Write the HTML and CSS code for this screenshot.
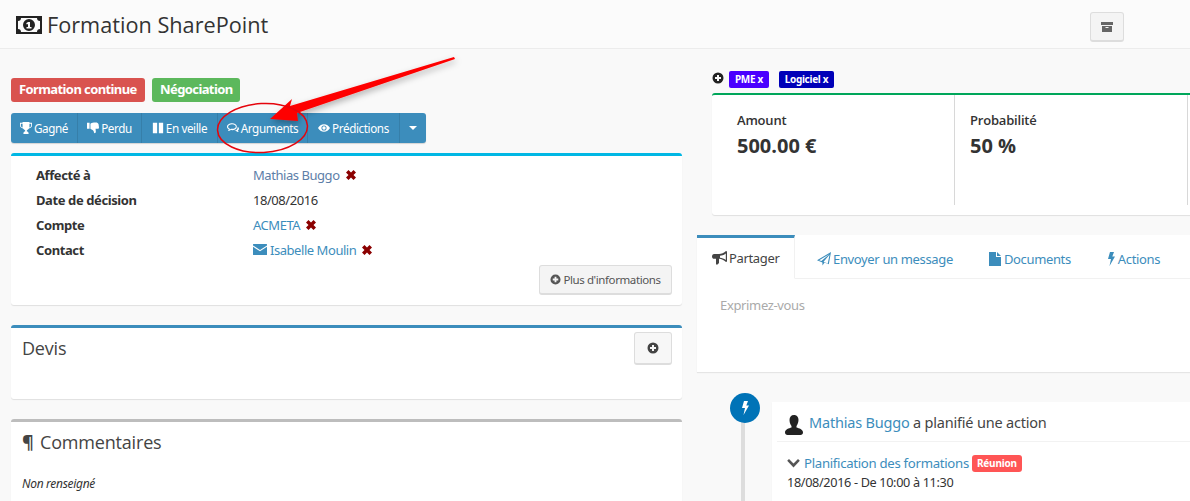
FILE: index.html
```html
<!DOCTYPE html>
<html lang="fr">
<head>
<meta charset="utf-8">
<title>Formation SharePoint</title>
<link rel="stylesheet" href="styles.css">
</head>
<body>
<svg class="defs" width="0" height="0">
  <symbol id="i-plus" viewBox="0 0 24 24"><path fill-rule="evenodd" d="M12 1a11 11 0 1 0 0 22a11 11 0 0 0 0-22zM10 6h4v4h4v4h-4v4h-4v-4H6v-4h4z"/></symbol>
  <symbol id="i-x" viewBox="0 0 24 24"><path d="M7 2l5 5 5-5 5 5-5 5 5 5-5 5-5-5-5 5-5-5 5-5-5-5z"/></symbol>
</svg>
<header class="topbar">
  <svg class="money" viewBox="0 0 26 18"><path fill-rule="evenodd" d="M0 0h26v18H0zM2 5v8a3 3 0 0 1 3 3h16a3 3 0 0 1 3-3V5a3 3 0 0 1-3-3H5a3 3 0 0 1-3 3z"/><path fill-rule="evenodd" d="M13 3a6 6 0 0 0 0 12a6 6 0 0 0 0-12zM12 6h2v5h1.500v1.500h-5V11H12V8l-1.200.6-.6-1.300z"/></svg>
  <h1 class="title">Formation SharePoint</h1>
  <button class="archive" type="button"><svg viewBox="0 0 12 12"><path d="M0 1h12v3H0zM1 5h10v6H1z"/><rect x="4.500" y="6" width="3" height="1" fill="#f4f4f4"/></svg></button>
</header>
<main class="layout">
  <section class="left">
    <div class="labels">
      <span class="label red">Formation continue</span>
      <span class="label green">Négociation</span>
    </div>
    <div class="btn-group">
      <a class="act w67"><svg viewBox="0 0 14 14"><path d="M3 0h8v1h3v3c0 2-2 3-3.500 3.500C10 8.500 8.500 9 8 9.500V11c1 0 2 .5 2 2v1H4v-1c0-1.500 1-2 2-2V9.500C5.500 9 4 8.500 3.500 7.500 2 7 0 6 0 4V1h3zM1 2v2c0 1 1 2 2 2.300V2zm12 0h-2v4.300c1-.3 2-1.300 2-2.300z"/></svg>Gagné</a>
      <a class="act w64"><svg viewBox="0 0 14 14"><path d="M0 1h3v7H0zM4 2c2-1.500 3-1.500 6-1.500 2 0 3 .5 3.500 2l.5 4c0 1-.5 1.500-1.500 1.500H10l.3 3c0 1-.5 2-1.300 2-.7 0-1-.5-1-1.500C7.500 10 6 9 4 8z"/></svg>Perdu</a>
      <a class="act w76"><svg viewBox="0 0 14 14"><path d="M1 1h5v12H1zM8 1h5v12H8z"/></svg>En veille</a>
      <a class="act w90"><svg viewBox="0 0 14 14"><path fill-rule="evenodd" d="M6 1.500c3 0 5.500 1.500 5.500 4s-2.500 4-5.500 4c-.6 0-1 0-1.500-.1C3.500 10.200 2.300 10.500 1 10.500c.7-.7 1-1.300 1.100-2C.8 7.700 0 6.700 0 5.500c0-2.500 3-4 6-4zm0 1.200c-2.500 0-4.700 1.200-4.700 2.800 0 1 .8 1.800 2 2.300l-.2 1c.6-.2 1-.5 1.500-.9.500.1.900.1 1.400.1 2.500 0 4.300-1.100 4.300-2.500S8.500 2.700 6 2.700z"/><path d="M12.500 5.500c1 .6 1.500 1.400 1.500 2.300 0 .9-.5 1.700-1.300 2.200.1.600.5 1.200 1 1.700-1.200 0-2.300-.5-3-1.200-.6.100-1.500 0-2-.2 2.500-.3 4-2 3.800-4.800z"/></svg>Arguments</a>
      <a class="act w92"><svg viewBox="0 0 14 14"><path fill-rule="evenodd" d="M7 2.500c3 0 5.500 1.800 7 4.500-1.500 2.700-4 4.500-7 4.500S1.500 9.700 0 7c1.500-2.700 4-4.500 7-4.500zM7 4a3 3 0 1 0 0 6 3 3 0 0 0 0-6z"/><circle cx="7" cy="7" r="2"/></svg>Prédictions</a>
      <a class="act caret-btn"><span class="caret"></span></a>
    </div>
    <div class="panel info">
      <dl class="rows">
        <dt>Affecté à</dt><dd><a class="muted">Mathias Buggo</a><svg class="del"><use href="#i-x"/></svg></dd>
        <dt>Date de décision</dt><dd>18/08/2016</dd>
        <dt>Compte</dt><dd><a>ACMETA</a><svg class="del"><use href="#i-x"/></svg></dd>
        <dt>Contact</dt><dd><svg class="mail" viewBox="0 0 14 11"><path d="M0 .5A.5.5 0 0 1 .5 0h13a.5.5 0 0 1 .5.500v.9L7 6 0 1.400zM0 2.800l7 4.400 7-4.400v7.700a.5.5 0 0 1-.5.5H.5a.5.5 0 0 1-.5-.5z"/></svg><a>Isabelle Moulin</a><svg class="del"><use href="#i-x"/></svg></dd>
      </dl>
      <div class="more-wrap"><button class="more" type="button"><svg><use href="#i-plus"/></svg>Plus d'informations</button></div>
    </div>
    <div class="panel devis">
      <h2>Devis</h2>
      <button class="add" type="button"><svg><use href="#i-plus"/></svg></button>
    </div>
    <div class="panel comments">
      <h2><span class="pilcrow">¶</span>Commentaires</h2>
      <p>Non renseigné</p>
    </div>
  </section>
  <section class="right">
    <div class="tags">
      <svg class="tag-add"><use href="#i-plus"/></svg>
      <span class="tag violet">PME x</span>
      <span class="tag navy">Logiciel x</span>
    </div>
    <div class="stats">
      <div class="stat"><div class="stat-name">Amount</div><div class="stat-val">500.00 €</div></div>
      <div class="stat"><div class="stat-name">Probabilité</div><div class="stat-val">50 %</div></div>
    </div>
    <div class="share">
      <nav class="tabs">
        <a class="tab active"><svg viewBox="0 0 15 14"><path fill-rule="evenodd" d="M15 .5v10l-1 .5C12 9 9.500 8 7 7.800V12l-1.500 1.500H4V7.800H2C1 7.800 0 7 0 5.500S1 3 2 3h5c2.500 0 5-1 7-3zM13.800 2.500C12 4 10 4.600 8 4.800v1.900c2 .2 4 .8 5.800 2.300z"/></svg>Partager</a>
        <a class="tab t-msg"><svg viewBox="0 0 16 16"><path fill-rule="evenodd" d="M16 0l-2.500 14-4.800-2-2.500 3.500V12L0 9.500zM14 2.500L2.500 9.300 5 10.400zM7.500 11l4.800 2L14.300 3z"/></svg>Envoyer un message</a>
        <a class="tab t-doc"><svg viewBox="0 0 12 14"><path d="M0 0h7v5h5v9H0zM8 0l4 4H8z"/></svg>Documents</a>
        <a class="tab t-act"><svg viewBox="0 0 7 14"><path d="M2 0h4L4.300 4.500H7L1.500 14 3 7H0z"/></svg>Actions</a>
      </nav>
      <div class="composer">Exprimez-vous</div>
    </div>
    <div class="timeline">
      <div class="dot"><svg viewBox="0 0 7 14"><path d="M2 0h4L4.300 4.500H7L1.500 14 3 7H0z"/></svg></div>
      <article class="item">
        <h3 class="item-head"><svg viewBox="0 0 18 20"><path d="M9 0c3 0 4.500 2.300 4.500 5S12 10.500 11.500 11v1.500c2.500 1 6.500 1.500 6.500 5 0 1.500-1 2.500-2.500 2.500h-13C1 20 0 19 0 17.500c0-3.500 4-4 6.500-5V11C6 10.500 4.500 8 4.500 5S6 0 9 0z"/></svg><a>Mathias Buggo</a> a planifié une action</h3>
        <div class="item-body">
          <div class="plan"><svg viewBox="0 0 14 10"><path d="M2 0l5 5 5-5 2 2-7 7.500L0 2z"/></svg><a>Planification des formations</a><span class="badge">Réunion</span></div>
          <div class="when">18/08/2016 - De 10:00 à 11:30</div>
        </div>
      </article>
    </div>
  </section>
</main>
<svg class="annot" viewBox="0 0 1190 501">
  <defs><filter id="sh" x="-20%" y="-20%" width="140%" height="160%"><feDropShadow dx="1" dy="3" stdDeviation="3" flood-color="#000" flood-opacity=".3"/></filter></defs>
  <path filter="url(#sh)" fill="#fe0000" d="M454 57l1 2-158 54 1 8-28-2 22-20-2 7z"/>
  <ellipse cx="262.500" cy="128" rx="45" ry="24.500" transform="rotate(-3 262.500 128)" fill="none" stroke="#e5040c" stroke-width="1.500"/>
</svg>
</body>
</html>
```
FILE: styles.css
```css
* { box-sizing: border-box; }
html, body { margin: 0; height: 501px; overflow: hidden; }
body { background: #f9f9f9; color: #333; font: 13px/20px "Noto Sans", "Open Sans", sans-serif; position: relative; }
a { color: #3c8dbc; text-decoration: none; }
svg { fill: currentColor; }
.defs { position: absolute; }

.topbar { height: 49px; background: #fbfbfb; border-bottom: 1px solid #ececec; display: flex; align-items: center; padding: 0 66px 0 16px; }
.money { width: 26px; height: 18px; color: #222; margin: 1px 5px 0 0; }
.title { margin: 1px auto 0 0; font: 400 21.700px/30px "Open Sans", sans-serif; color: #333; }
.archive { width: 34px; height: 30px; margin-top: 6px; padding: 0; background: #f4f4f4; border: 1px solid #ddd; border-bottom-width: 2px; border-radius: 3px; color: #666; display: flex; align-items: center; justify-content: center; }
.archive svg { width: 12px; height: 12px; }

.layout { display: flex; align-items: flex-start; padding-left: 11px; width: 1300px; }
.left { width: 671px; padding-top: 29px; }
.right { width: 560px; margin-left: 15px; padding-top: 22px; }

.labels { display: flex; gap: 7px; }
.label { height: 24px; padding: 0 8px; border-radius: 3px; color: #fff; font-weight: 700; font-size: 13px; line-height: 23px; letter-spacing: -.6px; }
.red { background: #d9534f; width: 134px; white-space: nowrap; }
.green { background: #5cb85c; width: 88px; }

.btn-group { display: flex; width: 415px; height: 30px; margin-top: 11px; background: #3c8dbc; border-radius: 3px; box-shadow: 0 1px 1px rgba(0,0,0,.15); }
.act { display: flex; align-items: center; justify-content: center; color: #fff; font-size: 11.700px; line-height: 19px; letter-spacing: -.4px; border-right: 1px solid #367fa9; white-space: nowrap; }
.act svg { width: 12px; height: 12px; margin-right: 2px; }
.w67 { width: 67px; } .w64 { width: 64px; } .w76 { width: 76px; } .w90 { width: 90px; } .w92 { width: 92px; }
.caret-btn { flex: 1; border-right: 0; }
.caret { border: 4px solid transparent; border-top-color: #fff; border-bottom: 0; }

.panel { background: #fff; border-radius: 3px; border-top: 3px solid #3c8dbc; box-shadow: 0 1px 1px rgba(0,0,0,.1); }
.info { margin-top: 10px; height: 152px; border-top-color: #00b7e4; padding: 6px 10px 0 25px; }
.rows { display: grid; grid-template-columns: 217px 1fr; grid-auto-rows: 25px; margin: 0; align-items: center; }
dt { font-weight: 700; letter-spacing: -.4px; }
dd { margin: 0; display: flex; align-items: center; letter-spacing: -.45px; }
.muted { color: #5d7ea8; }
.del { width: 12px; height: 12px; margin-left: 5px; color: #8b0000; }
.mail { width: 14px; height: 11px; margin-right: 3px; color: #3c8dbc; }
.more-wrap { display: flex; justify-content: flex-end; margin-top: 3px; }
.more { height: 30px; width: 133px; padding: 0; display: flex; align-items: center; justify-content: center; background: #f4f4f4; border: 1px solid #ddd; border-bottom-width: 2px; border-radius: 3px; color: #555; font: 11.500px "Noto Sans", sans-serif; letter-spacing: -.4px; }
.more svg { width: 11px; height: 11px; margin-right: 2px; }

.devis { margin-top: 20px; height: 74px; padding: 4px 10px 0 11px; display: flex; justify-content: space-between; align-items: flex-start; }
h2 { margin: 0; font: 400 18px/30px "Open Sans", sans-serif; color: #444; }
.devis h2 { margin-top: 1px; letter-spacing: -.2px; }
.add { width: 38px; height: 33px; padding: 0; background: #f7f7f7; border: 1px solid #ddd; border-bottom-width: 2px; border-radius: 3px; color: #444; display: flex; align-items: center; justify-content: center; }
.add svg { width: 12px; height: 12px; }

.comments { margin-top: 20px; height: 120px; padding: 5px 11px; border-top-color: #bdbdbd; }
.comments h2 { display: flex; letter-spacing: -.18px; }
.pilcrow { width: 18px; font-weight: 700; }
.comments p { margin: 17px 0 0; font-style: italic; font-size: 12px; letter-spacing: -.3px; }

.tags { display: flex; align-items: flex-start; height: 22px; padding-left: 15px; }
.tag-add { width: 12px; height: 12px; margin: 1px 5px 0 0; color: #222; }
.tag { height: 17px; color: #fff; font-weight: 700; font-size: 10px; line-height: 17px; text-align: center; border-radius: 2px; letter-spacing: -.3px; }
.violet { width: 40px; background: #4a00ff; margin-right: 10px; }
.navy { width: 55px; background: #0000b8; }

.stats { margin-left: 15px; height: 122px; background: #fff; border-top: 2px solid #00a65a; border-radius: 3px; box-shadow: 0 1px 1px rgba(0,0,0,.1); display: flex; align-items: flex-start; }
.stat { width: 233px; height: 110px; padding: 15px 0 0 15px; border-right: 1px solid #d8d8d8; }
.stat:first-child { width: 243px; padding-left: 25px; }
.stat-name { font: 600 13px/20px "Open Sans", sans-serif; letter-spacing: -.2px; }
.stat-val { font: 700 20px/30px "Open Sans", sans-serif; margin-top: 1px; color: #333; }

.share { margin-top: 20px; height: 137px; background: #fff; box-shadow: 0 1px 1px rgba(0,0,0,.08); }
.tabs { display: flex; height: 44px; border-bottom: 1px solid #f1f1f1; color: #3c8dbc; }
.tab { display: flex; align-items: center; height: 44px; padding-top: 3px; letter-spacing: -.35px; white-space: nowrap; }
.tab svg { height: 14px; margin-right: 1px; }
.tab.active { width: 98px; padding: 0 0 0 15px; color: #444; background: #fff; border-top: 3px solid #3c8dbc; border-right: 1px solid #f1f1f1; border-bottom: 1px solid #fff; }
.active svg { width: 15px; margin-right: 2px; }
.t-msg { margin-left: 21px; } .t-msg svg { width: 16px; }
.t-doc { margin-left: 36px; } .t-doc svg { width: 12px; margin-right: 3px; }
.t-act { margin-left: 37px; } .t-act svg { width: 7px; margin-right: 3px; }
.composer { padding: 16px 23px; color: #aaa; letter-spacing: -.35px; }

.timeline { position: relative; margin-top: 30px; padding-left: 75px; height: 140px; }
.timeline::before { content: ""; position: absolute; left: 44px; top: 20px; bottom: 0; width: 4px; background: #ddd; }
.dot { position: absolute; left: 33px; top: -9px; width: 30px; height: 30px; border-radius: 50%; background: #0073b7; color: #fff; display: flex; align-items: center; justify-content: center; }
.dot svg { width: 7px; height: 14px; }
.item { background: #fff; height: 120px; box-shadow: 0 1px 1px rgba(0,0,0,.05); }
.item-head { margin: 0; height: 40px; margin-left: 5px; padding: 7px 0 0 8px; border-bottom: 1px solid #f2f2f2; display: flex; align-items: flex-start; font: 400 14.500px/26px "Noto Sans", sans-serif; letter-spacing: -.2px; color: #444; white-space: pre; }
.item-head svg { width: 18px; height: 20px; margin: 6px 6px 0 0; color: #222; }
.item-body { padding: 10px 0 0 15px; }
.plan { display: flex; align-items: center; height: 22px; letter-spacing: -.3px; font-size: 13.200px; }
.plan svg { width: 13px; height: 9px; margin-right: 4px; color: #555; }
.badge { margin-left: 3px; width: 50px; height: 17px; background: #ff5555; color: #fff; border-radius: 3px; font-weight: 700; font-size: 10px; line-height: 17px; text-align: center; letter-spacing: -.2px; }
.when { margin-top: -2px; font-size: 12.700px; letter-spacing: -.35px; }

.annot { position: absolute; left: 0; top: 0; width: 1190px; height: 501px; pointer-events: none; }
```
